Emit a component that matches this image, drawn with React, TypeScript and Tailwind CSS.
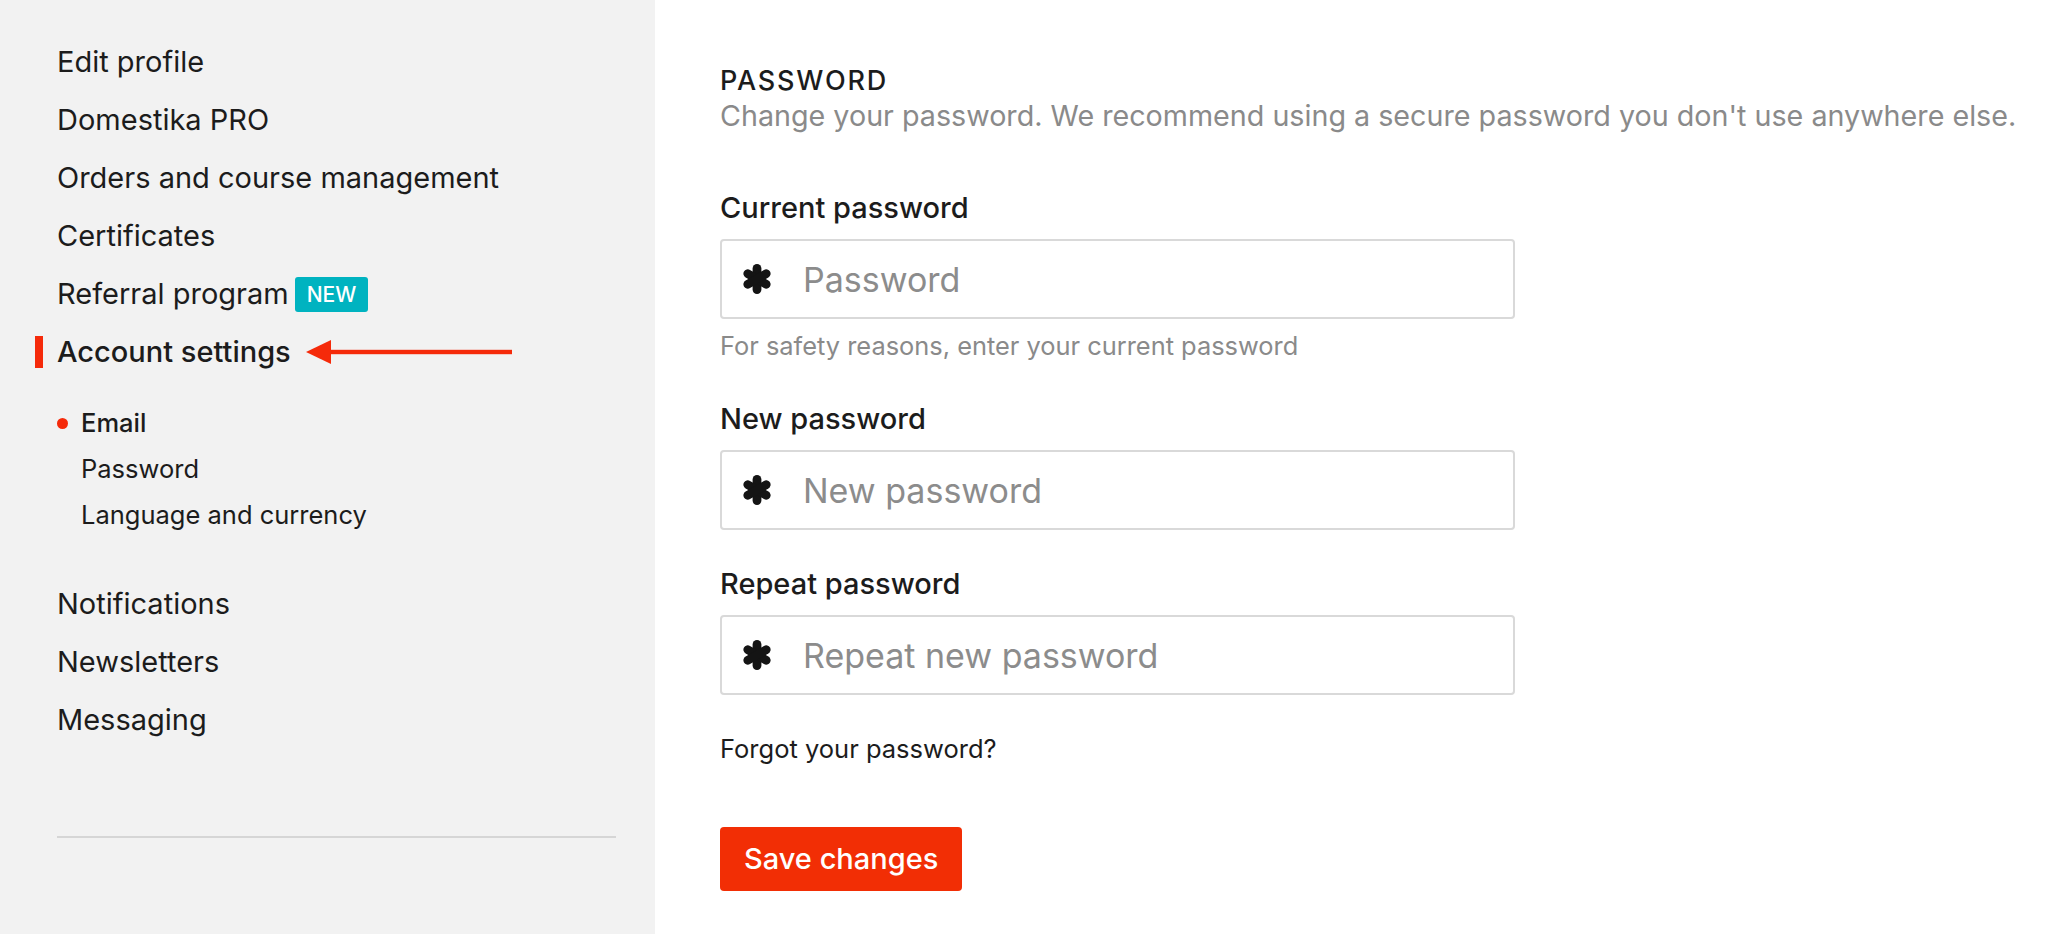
import { ReactNode } from "react"

const topLinks = ["Edit profile", "Domestika PRO", "Orders and course management", "Certificates"]
const bottomLinks = ["Notifications", "Newsletters", "Messaging"]
const subLinks = ["Email", "Password", "Language and currency"]

const Asterisk = () => (
  <svg width="30" height="30" viewBox="0 0 30 30" className="shrink-0">
    <g stroke="#141414" strokeWidth="8.8" strokeLinecap="round">
      <line x1="15" y1="4.4" x2="15" y2="25.6" />
      <line x1="5.8" y1="9.7" x2="24.2" y2="20.3" />
      <line x1="5.8" y1="20.3" x2="24.2" y2="9.7" />
    </g>
  </svg>
)

const Arrow = () => (
  <svg width="206" height="26" viewBox="0 0 206 26" className="ml-[15px] shrink-0">
    <polygon points="0,13 25,1 25,25" fill="#f52a0a" />
    <rect x="23" y="10.8" width="183" height="4.4" fill="#f52a0a" />
  </svg>
)

const Field = ({ label, placeholder, children }: { label: string; placeholder: string; children?: ReactNode }) => (
  <div className="flex flex-col">
    <label className="text-[29px] leading-[36px] font-medium text-[#1c1c1c]">{label}</label>
    <div className="mt-[13px] flex h-[80px] w-[795px] items-center rounded-[4px] border-2 border-[#d9d9d9] bg-white pl-[20px]">
      <Asterisk />
      <input
        type="password"
        placeholder={placeholder}
        className="ml-[31px] w-full bg-transparent text-[34px] text-[#1c1c1c] placeholder:text-[#8c8c8c] focus-visible:outline-0"
      />
    </div>
    {children}
  </div>
)

const App = () => {
  return (
    <div className="flex min-h-screen bg-white text-[#1c1c1c]" style={{ fontFamily: "Inter, 'Liberation Sans', sans-serif" }}>
      <aside className="flex w-[655px] shrink-0 flex-col bg-[#f2f2f2] pt-[33px] pl-[57px] pr-[39px]">
        <nav className="flex flex-col">
          {topLinks.map((l) => (
            <a key={l} className="text-[29px] leading-[58px]">{l}</a>
          ))}
          <a className="flex items-center text-[29px] leading-[58px]">
            Referral program
            <span className="ml-[6px] rounded-[3px] bg-[#00b3c0] px-[12px] text-[21px] leading-[35px] font-medium text-white">NEW</span>
          </a>
          <div className="-ml-[22px] flex items-center">
            <span className="mr-[14px] h-[32px] w-[8px] bg-[#f52a0a]" />
            <a className="text-[29px] leading-[58px] font-medium">Account settings</a>
            <Arrow />
          </div>
          <ul className="mt-[19px] flex flex-col">
            {subLinks.map((s, i) => (
              <li key={s} className="flex items-center text-[25.5px] leading-[46px]">
                <span className={`mr-[13px] h-[11px] w-[11px] rounded-full ${i === 0 ? "bg-[#f52a0a]" : "bg-transparent"}`} />
                <span className={i === 0 ? "font-medium" : ""}>{s}</span>
              </li>
            ))}
          </ul>
          <div className="mt-[37px] flex flex-col">
            {bottomLinks.map((l) => (
              <a key={l} className="text-[29px] leading-[58px]">{l}</a>
            ))}
          </div>
        </nav>
        <div className="mt-[87px] h-[2px] bg-[#d6d6d6]" />
      </aside>

      <main className="flex flex-col pt-[64px] pl-[65px]">
        <h2 className="text-[27px] leading-[34px] font-medium tracking-[1.8px]">PASSWORD</h2>
        <p className="text-[28.7px] leading-[35px] text-[#8a8a8a]">
          Change your password. We recommend using a secure password you don't use anywhere else.
        </p>

        <div className="mt-[57px] flex flex-col">
          <Field label="Current password" placeholder="Password">
            <p className="mt-[12px] text-[25.4px] leading-[30px] text-[#8a8a8a]">For safety reasons, enter your current password</p>
          </Field>
          <div className="mt-[40px]">
            <Field label="New password" placeholder="New password" />
          </div>
          <div className="mt-[36px]">
            <Field label="Repeat password" placeholder="Repeat new password" />
          </div>
        </div>

        <a className="mt-[38px] text-[25.5px] leading-[32px]">Forgot your password?</a>

        <div className="mt-[62px]">
          <button className="h-[64px] rounded-[4px] bg-[#f22e05] px-[24px] text-[29px] font-medium text-white">Save changes</button>
        </div>
      </main>
    </div>
  )
}

export default App
